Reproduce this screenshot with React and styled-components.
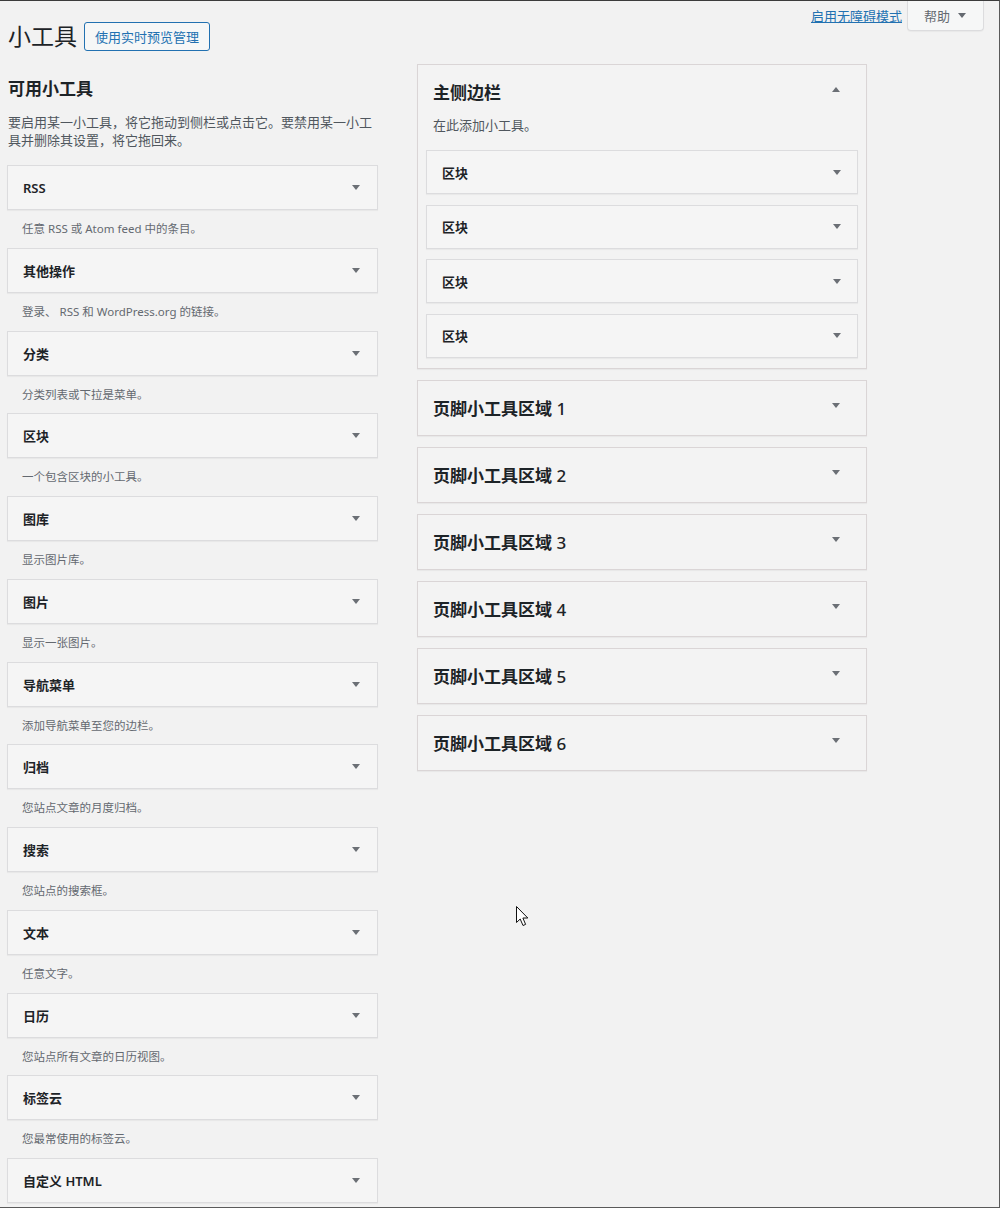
import React from "react";
import styled, { createGlobalStyle } from "styled-components";

const GlobalStyle = createGlobalStyle`
  body {
    margin: 0;
    background: #f2f2f2;
    font-family: "Noto Sans", "Noto Sans CJK SC", sans-serif;
    color: #1d2327;
  }
`;

const Frame = styled.div`
  position: relative;
  width: 1000px;
  height: 1208px;
  box-sizing: border-box;
  border-top: 1px solid #3c3c3c;
  border-right: 1px solid #5a5a5a;
  border-bottom: 1px solid #5a5a5a;
  background: #f2f2f2;
  overflow: hidden;
`;

const TopRow = styled.div`
  display: flex;
  justify-content: space-between;
  align-items: flex-start;
  padding: 0 15px 0 8px;
`;

const TitleRow = styled.div`
  display: flex;
  align-items: center;
  gap: 7px;
  margin-top: 21px;
`;

const PageTitle = styled.h1`
  margin: 0;
  font-size: 23px;
  font-weight: 400;
  line-height: 29px;
  color: #1d2327;
`;

const OutlineButton = styled.a`
  display: inline-flex;
  align-items: center;
  height: 29px;
  box-sizing: border-box;
  padding: 0 10px;
  border: 1px solid #2271b1;
  border-radius: 3px;
  background: #f6f7f7;
  color: #2271b1;
  font-size: 13px;
  text-decoration: none;
`;

const MetaLinks = styled.div`
  display: flex;
  align-items: flex-start;
  gap: 5px;
`;

const A11yLink = styled.a`
  margin-top: 6px;
  font-size: 13px;
  line-height: 18px;
  color: #2271b1;
  text-decoration: underline;
`;

const HelpTab = styled.div`
  display: flex;
  align-items: center;
  gap: 8px;
  height: 30px;
  box-sizing: border-box;
  padding: 0 17px 0 16px;
  border: 1px solid #dcdcde;
  border-top: 0;
  border-radius: 0 0 4px 4px;
  background: #f6f7f7;
  box-shadow: 0 1px 1px rgba(0, 0, 0, 0.04);
  font-size: 13px;
  color: #646970;
`;

const Arrow = styled.span`
  display: inline-block;
  flex: none;
  width: 0;
  height: 0;
  border-left: 4px solid transparent;
  border-right: 4px solid transparent;
  ${({ $up, $color = "#6b6f75" }) =>
    $up ? `border-bottom: 5px solid ${$color};` : `border-top: 5px solid ${$color};`}
  margin-top: ${({ $offset = 0 }) => $offset}px;
`;

const Columns = styled.div`
  display: flex;
  align-items: flex-start;
  gap: 39px;
  margin-top: 13px;
  padding-left: 7px;
`;

const LeftCol = styled.div`
  width: 371px;
`;

const RightCol = styled.div`
  display: flex;
  flex-direction: column;
  gap: 11px;
  width: 450px;
`;

const SectionHeading = styled.h2`
  margin: 14px 0 13px 1px;
  font-size: 17px;
  line-height: 22px;
  font-weight: 600;
  color: #1d2327;
`;

const Intro = styled.p`
  margin: 0 0 16px 1px;
  font-size: 13px;
  line-height: 18px;
  color: #50575e;
`;

const WidgetBar = styled.div`
  display: flex;
  align-items: center;
  justify-content: space-between;
  height: ${({ $h = 45 }) => $h}px;
  box-sizing: border-box;
  padding: 0 ${({ $pr = 17 }) => $pr}px 0 15px;
  border: 1px solid #dcdcde;
  background: #f5f5f5;
  box-shadow: 0 1px 1px rgba(0, 0, 0, 0.04);
  font-size: 13px;
  font-weight: 600;
  color: #1d2327;
`;

const WidgetDesc = styled.div`
  padding: 11px 15px 10.75px;
  font-size: 11.5px;
  line-height: 16px;
  color: #646970;
`;

const SidebarBox = styled.div`
  border: 1px solid #dad5d6;
  background: #f3f3f3;
  box-shadow: 0 1px 1px rgba(0, 0, 0, 0.04);
  padding-bottom: ${({ $open }) => ($open ? 10 : 15)}px;
`;

const SidebarHead = styled.div`
  display: flex;
  align-items: flex-start;
  justify-content: space-between;
  padding: 17px 26px 0 15px;
`;

const SidebarTitle = styled.h2`
  margin: 0;
  font-size: 17px;
  line-height: 22px;
  font-weight: 600;
  color: #1d2327;
`;

const AreaNumber = styled.span`
  font-weight: 500;
`;

const SidebarDesc = styled.p`
  margin: 12px 15px 16px;
  font-size: 13px;
  line-height: 18px;
  color: #50575e;
`;

const SidebarWidgets = styled.div`
  display: flex;
  flex-direction: column;
  gap: 10.5px;
  padding: 0 8px;
`;

const Cursor = styled.svg`
  position: absolute;
  left: 516px;
  top: 905px;
`;

const widgets = [
  ["RSS", "任意 RSS 或 Atom feed 中的条目。"],
  ["其他操作", "登录、 RSS 和 WordPress.org 的链接。"],
  ["分类", "分类列表或下拉是菜单。"],
  ["区块", "一个包含区块的小工具。"],
  ["图库", "显示图片库。"],
  ["图片", "显示一张图片。"],
  ["导航菜单", "添加导航菜单至您的边栏。"],
  ["归档", "您站点文章的月度归档。"],
  ["搜索", "您站点的搜索框。"],
  ["文本", "任意文字。"],
  ["日历", "您站点所有文章的日历视图。"],
  ["标签云", "您最常使用的标签云。"],
  ["自定义 HTML", ""],
];

const footers = [1, 2, 3, 4, 5, 6];

const App = () => {
  return (
    <Frame>
      <GlobalStyle />
      <TopRow>
        <TitleRow>
          <PageTitle>小工具</PageTitle>
          <OutlineButton href="#customize">使用实时预览管理</OutlineButton>
        </TitleRow>
        <MetaLinks>
          <A11yLink href="#a11y">启用无障碍模式</A11yLink>
          <HelpTab>
            帮助
            <Arrow $color="#646970" />
          </HelpTab>
        </MetaLinks>
      </TopRow>

      <Columns>
        <LeftCol>
          <SectionHeading>可用小工具</SectionHeading>
          <Intro>
            要启用某一小工具，将它拖动到侧栏或点击它。要禁用某一小工具并删除其设置，将它拖回来。
          </Intro>
          {widgets.map(([title, desc]) => (
            <div key={title}>
              <WidgetBar>
                {title}
                <Arrow />
              </WidgetBar>
              {desc && <WidgetDesc>{desc}</WidgetDesc>}
            </div>
          ))}
        </LeftCol>

        <RightCol>
          <SidebarBox $open>
            <SidebarHead>
              <SidebarTitle>主侧边栏</SidebarTitle>
              <Arrow $up $offset={5} />
            </SidebarHead>
            <SidebarDesc>在此添加小工具。</SidebarDesc>
            <SidebarWidgets>
              {[0, 1, 2, 3].map((i) => (
                <WidgetBar key={i} $h={44} $pr={16}>
                  区块
                  <Arrow />
                </WidgetBar>
              ))}
            </SidebarWidgets>
          </SidebarBox>
          {footers.map((n) => (
            <SidebarBox key={n}>
              <SidebarHead>
                <SidebarTitle>
                  页脚小工具区域 <AreaNumber>{n}</AreaNumber>
                </SidebarTitle>
                <Arrow $offset={5} />
              </SidebarHead>
            </SidebarBox>
          ))}
        </RightCol>
      </Columns>

      <Cursor width="13" height="21" viewBox="0 0 13 21">
        <path
          d="M0.5 0.5 L0.5 16.5 L4.2 13 L7 19.5 L9.6 18.4 L6.9 12 L11.8 12 Z"
          fill="#fff"
          stroke="#111"
          strokeWidth="1"
          strokeLinejoin="round"
        />
      </Cursor>
    </Frame>
  );
};

export default App;
